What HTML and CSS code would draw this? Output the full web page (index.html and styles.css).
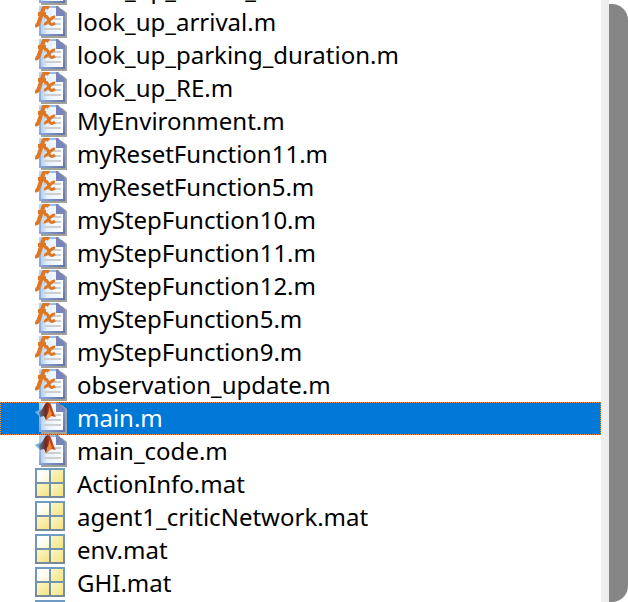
FILE: index.html
```html
<!DOCTYPE html>
<html lang="en">
  <head>
    <meta charset="UTF-8" />
    <meta name="viewport" content="width=device-width, initial-scale=1.0" />
    <title>Current Folder</title>
    <link rel="stylesheet" href="styles.css">
  </head>
  <body>
    <svg class="sprite" aria-hidden="true">
      <defs>
        <linearGradient id="paper" x1="0" y1="0" x2="1" y2="0">
          <stop offset="0" stop-color="#a4caf3" />
          <stop offset="0.3" stop-color="#e6f1fd" />
          <stop offset="1" stop-color="#ffffff" />
        </linearGradient>
        <linearGradient id="edge" x1="0" y1="0" x2="1" y2="1">
          <stop offset="0" stop-color="#b5d5f5" />
          <stop offset="0.5" stop-color="#8ba3d6" />
          <stop offset="1" stop-color="#6675ae" />
        </linearGradient>
        <linearGradient id="frame" x1="0" y1="0" x2="0" y2="1">
          <stop offset="0" stop-color="#6f9bc4" />
          <stop offset="1" stop-color="#76899a" />
        </linearGradient>
        <linearGradient id="cell" x1="0" y1="0" x2="1" y2="1">
          <stop offset="0" stop-color="#fcf6c4" />
          <stop offset="1" stop-color="#f4e384" />
        </linearGradient>
        <linearGradient id="cellLight" x1="0" y1="0" x2="1" y2="1">
          <stop offset="0.3" stop-color="#ffffff" />
          <stop offset="1" stop-color="#fbf6cf" />
        </linearGradient>
        <linearGradient id="peak" x1="0" y1="0" x2="1" y2="0">
          <stop offset="0" stop-color="#5b7795" />
          <stop offset="0.4" stop-color="#6b2a22" />
          <stop offset="0.65" stop-color="#b93a16" />
          <stop offset="1" stop-color="#d9501c" />
        </linearGradient>
      </defs>
      <symbol id="page" viewBox="0 0 32 32">
        <path d="M6 3H27L32 7V32H6Z" fill="#a3a299" />
        <path d="M5 1H22L29 8V29H5Z" fill="url(#paper)" stroke="url(#edge)" stroke-width="2" />
        <path d="M21 0H23L30 7V10H21Z" fill="#7885bb" />
        <path d="M9 13H26M9 18H26M9 23H26" stroke="#cdcfd0" stroke-width="2" />
      </symbol>
      <symbol id="function" viewBox="0 0 32 32">
        <use href="#page" />
        <path d="M14 2C11 0 9 0 8 4L4 16C3 19 2 20 0 19M3 8H11" fill="none" stroke="#e0761f" stroke-width="4" />
        <path d="M9 11C12 9 13 12 14 15C15 18 16 20 20 17M20 11C16 10 12 19 9 18" fill="none" stroke="#e0761f" stroke-width="3" />
      </symbol>
      <symbol id="script" viewBox="0 0 32 32">
        <use href="#page" />
        <path d="M0 10L6 7L10 11L5 15Z" fill="#72b3df" />
        <path d="M4 10C8 9 9 0 13 0C17 0 17 10 21 15L16 14L11 18L9 14L5 15Z" fill="url(#peak)" />
        <path d="M13 2C15 5 14 10 12 13L11 18L16 14L17 12Z" fill="#ec8a35" />
      </symbol>
      <symbol id="data" viewBox="0 0 32 32">
        <path d="M0 0H30V30H0Z" fill="url(#frame)" />
        <path d="M2 2H14V14H2Z" fill="url(#cellLight)" />
        <path d="M16 2H28V14H16Z" fill="url(#cell)" />
        <path d="M2 16H14V28H2Z" fill="url(#cell)" />
        <path d="M16 16H28V28H16Z" fill="url(#cell)" />
      </symbol>
    </svg>

    <main class="browser">
      <ul class="files">
        <li class="file"><svg class="icon"><use href="#function" /></svg>look_up_action_t.m</li>
        <li class="file"><svg class="icon"><use href="#function" /></svg>look_up_arrival.m</li>
        <li class="file"><svg class="icon"><use href="#function" /></svg>look_up_parking_duration.m</li>
        <li class="file"><svg class="icon"><use href="#function" /></svg>look_up_RE.m</li>
        <li class="file"><svg class="icon"><use href="#function" /></svg>MyEnvironment.m</li>
        <li class="file"><svg class="icon"><use href="#function" /></svg>myResetFunction11.m</li>
        <li class="file"><svg class="icon"><use href="#function" /></svg>myResetFunction5.m</li>
        <li class="file"><svg class="icon"><use href="#function" /></svg>myStepFunction10.m</li>
        <li class="file"><svg class="icon"><use href="#function" /></svg>myStepFunction11.m</li>
        <li class="file"><svg class="icon"><use href="#function" /></svg>myStepFunction12.m</li>
        <li class="file"><svg class="icon"><use href="#function" /></svg>myStepFunction5.m</li>
        <li class="file"><svg class="icon"><use href="#function" /></svg>myStepFunction9.m</li>
        <li class="file"><svg class="icon"><use href="#function" /></svg>observation_update.m</li>
        <li class="file selected"><svg class="icon"><use href="#script" /></svg>main.m</li>
        <li class="file"><svg class="icon"><use href="#script" /></svg>main_code.m</li>
        <li class="file"><svg class="icon"><use href="#data" /></svg>ActionInfo.mat</li>
        <li class="file"><svg class="icon"><use href="#data" /></svg>agent1_criticNetwork.mat</li>
        <li class="file"><svg class="icon"><use href="#data" /></svg>env.mat</li>
        <li class="file"><svg class="icon"><use href="#data" /></svg>GHI.mat</li>
        <li class="file"><svg class="icon"><use href="#data" /></svg></li>
      </ul>
      <div class="scrollbar">
        <div class="thumb"></div>
      </div>
    </main>
  </body>
</html>
```
FILE: styles.css
```css
* {
  box-sizing: border-box;
}
body {
  margin: 0;
  background-color: white;
  color: black;
  font-family: "Segoe UI", "Noto Sans", "Open Sans", sans-serif;
  font-size: 24px;
}
.sprite {
  position: absolute;
  width: 0;
  height: 0;
}
.browser {
  display: flex;
  height: 100vh;
  overflow: hidden;
}
/* list is scrolled so the first row is mostly hidden */
.files {
  flex: 1;
  margin: -27px 0 0;
  padding: 0;
  list-style: none;
}
.file {
  display: flex;
  gap: 10px;
  height: 33px;
  padding-left: 35px;
  line-height: 32px;
  white-space: nowrap;
}
.file.selected {
  background-color: #0078d7;
  color: white;
  outline: 1px dotted #ff8728;
  outline-offset: -1px;
}
.icon {
  flex: none;
  width: 32px;
  height: 32px;
}
.scrollbar {
  width: 27px;
  padding: 4px 0 0 8px;
  background: linear-gradient(to right, #eeeeee 8px, white 8px);
}
.thumb {
  height: 100%;
  border-radius: 0 16px 16px 0;
  background-color: #868686;
}
```
